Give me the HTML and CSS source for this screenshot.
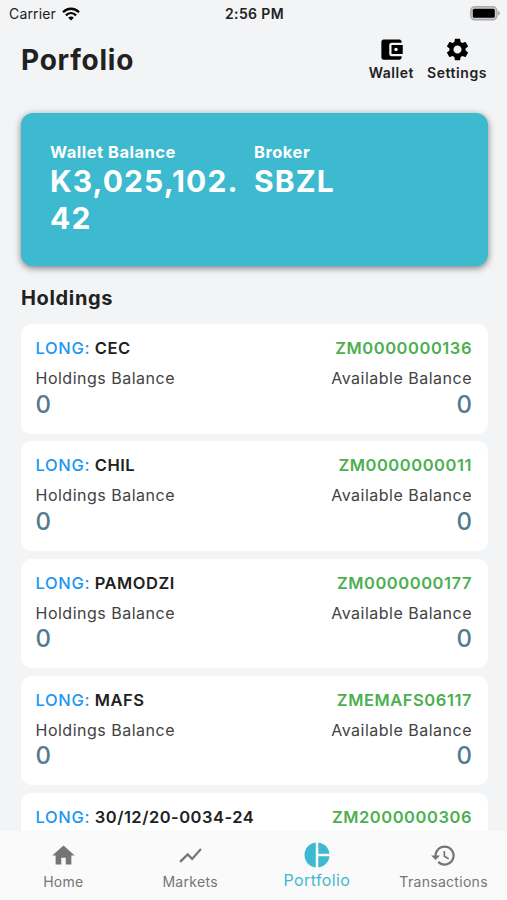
FILE: index.html
```
<!DOCTYPE html>
<html lang="en">
<head>
    <meta charset="UTF-8">
    <meta name="viewport" content="width=device-width, initial-scale=1.0">
    <title>Portfolio</title>
    <link rel="stylesheet" href="styles.css">
</head>
<body>
    <div class="status-bar">
        <div class="carrier">
            <span>Carrier</span>
            <svg width="18" height="14" viewBox="0 0 18 14" fill="none" stroke="#000" stroke-width="2.3">
                <path d="M1 5.2C5.5.6 12.5.6 17 5.2"/>
                <path d="M3.9 8.3c3-2.9 7.2-2.9 10.2 0"/>
                <path d="M9 13.4 6.2 10.7c1.6-1.5 4-1.5 5.6 0z" fill="#000" stroke="none"/>
            </svg>
        </div>
        <div class="time">2:56 PM</div>
        <div class="battery">
            <svg width="31" height="15" viewBox="0 0 31 15">
                <rect x="1.8" y=".8" width="26" height="13" rx="4" fill="#d0d0d2" stroke="#a9a9ab" stroke-width="1.5"/>
                <rect x="3.8" y="2.8" width="22" height="9" rx="1.5" fill="#000"/>
                <path d="M29 5v4.6c1.2-.4 1.9-1.2 1.9-2.3S30.200 5.400 29 5z" fill="#a9a9ab"/>
            </svg>
        </div>
    </div>

    <div class="header">
        <h1>Porfolio</h1>
        <div class="actions">
            <div class="action">
                <svg width="27" height="27" viewBox="0 0 24 24"><path d="M21 18v1c0 1.1-.9 2-2 2H5c-1.110 0-2-.9-2-2V5c0-1.100.89-2 2-2h14c1.100 0 2 .9 2 2v1h-9c-1.110 0-2 .9-2 2v8c0 1.100.89 2 2 2h9zm-9-2h10V8H12v8zm4-2.500c-.83 0-1.500-.67-1.500-1.500s.67-1.500 1.500-1.500 1.500.67 1.500 1.500-.67 1.500-1.500 1.500z"/></svg>
                <span>Wallet</span>
            </div>
            <div class="action">
                <svg width="27" height="27" viewBox="0 0 24 24"><path d="M19.140 12.940c.04-.3.060-.61.060-.94 0-.32-.02-.64-.07-.94l2.030-1.580c.18-.14.230-.41.120-.61l-1.920-3.320c-.12-.22-.37-.29-.59-.22l-2.390.96c-.5-.38-1.030-.7-1.620-.94l-.36-2.540c-.04-.24-.24-.41-.48-.41h-3.840c-.24 0-.43.170-.47.410l-.36 2.540c-.59.240-1.130.570-1.620.940l-2.390-.96c-.22-.08-.47 0-.59.220L2.740 8.870c-.12.210-.08.470.120.610l2.030 1.580c-.05.3-.09.630-.09.940s.02.640.070.940l-2.030 1.580c-.18.140-.23.410-.12.610l1.920 3.320c.12.220.37.290.59.220l2.390-.96c.5.380 1.030.7 1.620.94l.36 2.540c.05.240.24.410.48.410h3.840c.24 0 .44-.17.470-.41l.36-2.540c.59-.24 1.130-.56 1.620-.94l2.390.96c.22.080.47 0 .59-.22l1.920-3.320c.12-.22.070-.47-.12-.61l-2.010-1.580zM12 15.600c-1.980 0-3.600-1.620-3.600-3.600s1.620-3.600 3.600-3.600 3.600 1.620 3.600 3.600-1.620 3.600-3.600 3.600z"/></svg>
                <span>Settings</span>
            </div>
        </div>
    </div>

    <div class="wallet-card">
        <div class="wallet-item">
            <div class="wallet-label">Wallet Balance</div>
            <div class="wallet-value">K3,025,102.<br>42</div>
        </div>
        <div class="wallet-item">
            <div class="wallet-label">Broker</div>
            <div class="wallet-value">SBZL</div>
        </div>
    </div>

    <h2>Holdings</h2>
    <div class="holdings">
        <div class="holding">
            <div class="row title"><span><b>LONG:</b> CEC</span><span class="isin">ZM0000000136</span></div>
            <div class="row label"><span>Holdings Balance</span><span>Available Balance</span></div>
            <div class="row amount"><span>0</span><span>0</span></div>
        </div>
        <div class="holding">
            <div class="row title"><span><b>LONG:</b> CHIL</span><span class="isin">ZM0000000011</span></div>
            <div class="row label"><span>Holdings Balance</span><span>Available Balance</span></div>
            <div class="row amount"><span>0</span><span>0</span></div>
        </div>
        <div class="holding">
            <div class="row title"><span><b>LONG:</b> PAMODZI</span><span class="isin">ZM0000000177</span></div>
            <div class="row label"><span>Holdings Balance</span><span>Available Balance</span></div>
            <div class="row amount"><span>0</span><span>0</span></div>
        </div>
        <div class="holding">
            <div class="row title"><span><b>LONG:</b> MAFS</span><span class="isin">ZMEMAFS06117</span></div>
            <div class="row label"><span>Holdings Balance</span><span>Available Balance</span></div>
            <div class="row amount"><span>0</span><span>0</span></div>
        </div>
        <div class="holding">
            <div class="row title"><span><b>LONG:</b> 30/12/20-0034-24</span><span class="isin">ZM2000000306</span></div>
        </div>
    </div>

    <div class="nav">
        <div class="nav-item">
            <svg width="27" height="27" viewBox="0 0 24 24"><path d="M10 20v-6h4v6h5v-8h3L12 3 2 12h3v8z"/></svg>
            <span>Home</span>
        </div>
        <div class="nav-item">
            <svg width="27" height="27" viewBox="0 0 24 24"><path d="M3.500 18.490l6-6.010 4 4L22 6.920l-1.410-1.410-7.090 7.970-4-4L2 16.990z"/></svg>
            <span>Markets</span>
        </div>
        <div class="nav-item active">
            <svg width="30" height="30" viewBox="0 0 24 24"><path d="M11 2v20c-5.070-.5-9-4.790-9-10s3.930-9.500 9-10zm2.030 0v8.990H22c-.47-4.740-4.240-8.520-8.970-8.990zm0 11.010V22c4.740-.47 8.500-4.250 8.970-8.990h-8.970z"/></svg>
            <span>Portfolio</span>
        </div>
        <div class="nav-item">
            <svg width="27" height="27" viewBox="0 0 24 24"><path d="M13 3c-4.970 0-9 4.030-9 9H1l3.890 3.890.070.140L9 12H6c0-3.870 3.130-7 7-7s7 3.130 7 7-3.130 7-7 7c-1.930 0-3.680-.79-4.940-2.060l-1.420 1.420C8.270 19.990 10.510 21 13 21c4.970 0 9-4.030 9-9s-4.030-9-9-9zm-1 5v5l4.280 2.540.72-1.210-3.500-2.080V8H12z"/></svg>
            <span>Transactions</span>
        </div>
    </div>
</body>
</html>
```
FILE: styles.css
```
* {
    box-sizing: border-box;
}
body {
    display: flex;
    flex-direction: column;
    height: 900px;
    margin: 0;
    overflow: hidden;
    background-color: #f3f4f6;
    color: #212121;
    font-family: Inter, sans-serif;
}
svg {
    display: block;
}
.status-bar {
    display: grid;
    grid-template-columns: 1fr auto 1fr;
    align-items: center;
    flex: none;
    height: 27px;
    padding: 0 7px 0 9px;
    font-size: 14px;
}
.carrier {
    display: flex;
    align-items: center;
    gap: 6px;
    letter-spacing: 0.15px;
}
.time {
    font-size: 14px;
    font-weight: 600;
    letter-spacing: 0.4px;
}
.battery {
    display: flex;
    justify-content: flex-end;
}
.header {
    display: flex;
    justify-content: space-between;
    flex: none;
    height: 86px;
    padding: 9px 20px 0 21px;
}
h1 {
    margin: 6px 0 0;
    font-size: 28px;
    line-height: 37px;
    font-weight: 700;
    letter-spacing: 0.75px;
}
.actions {
    display: flex;
    gap: 13px;
}
.action {
    display: flex;
    flex-direction: column;
    align-items: center;
    font-size: 14px;
    line-height: 20px;
    font-weight: 600;
    letter-spacing: 0.55px;
}
.wallet-card {
    display: grid;
    grid-template-columns: 204px 1fr;
    flex: none;
    height: 153px;
    margin: 0 19.5px 0 20.5px;
    padding: 29px 29.5px;
    border-radius: 12px;
    background-color: #3db9d0;
    color: #fff;
    box-shadow: 0 2px 7px rgba(0, 0, 0, 0.5);
}
.wallet-label {
    font-size: 16.5px;
    line-height: 21px;
    font-weight: 700;
    letter-spacing: 0.5px;
}
.wallet-value {
    font-size: 30px;
    line-height: 37px;
    font-weight: 700;
    letter-spacing: 1.1px;
}
h2 {
    flex: none;
    margin: 19px 21px 13px;
    font-size: 20px;
    line-height: 26px;
    font-weight: 700;
    letter-spacing: 0.65px;
}
.holdings {
    display: flex;
    flex-direction: column;
    gap: 7.8px;
    flex: 1;
    min-height: 0;
    padding: 0 19.5px 0 20.5px;
    overflow: hidden;
}
.holding {
    flex: none;
    height: 109.5px;
    padding: 13px 15.5px 0 15px;
    border-radius: 10px;
    background-color: #fff;
}
.row {
    display: flex;
    justify-content: space-between;
}
.title {
    font-size: 16.5px;
    line-height: 22px;
    font-weight: 600;
    letter-spacing: 0.5px;
}
.title b {
    color: #2196f3;
    font-weight: 500;
    letter-spacing: 0.65px;
}
.title .isin {
    color: #4caf50;
    letter-spacing: 0.55px;
}
.label {
    margin-top: 8px;
    color: #424242;
    font-size: 16px;
    line-height: 22px;
    letter-spacing: 0.5px;
}
.amount {
    margin-top: 0.5px;
    color: #547a8e;
    font-size: 24px;
    line-height: 30px;
    font-weight: 500;
}
.nav {
    display: grid;
    grid-template-columns: repeat(4, 1fr);
    flex: none;
    height: 69px;
    background-color: #fafafa;
    color: #757575;
}
.nav svg {
    fill: currentColor;
}
.nav-item {
    display: flex;
    flex-direction: column;
    align-items: center;
    padding-top: 11px;
    font-size: 14px;
    line-height: 25px;
    letter-spacing: 0.3px;
}
.nav-item.active {
    padding-top: 9px;
    color: #3db9d0;
    font-size: 16px;
    line-height: 21px;
    letter-spacing: 0.4px;
}
```
